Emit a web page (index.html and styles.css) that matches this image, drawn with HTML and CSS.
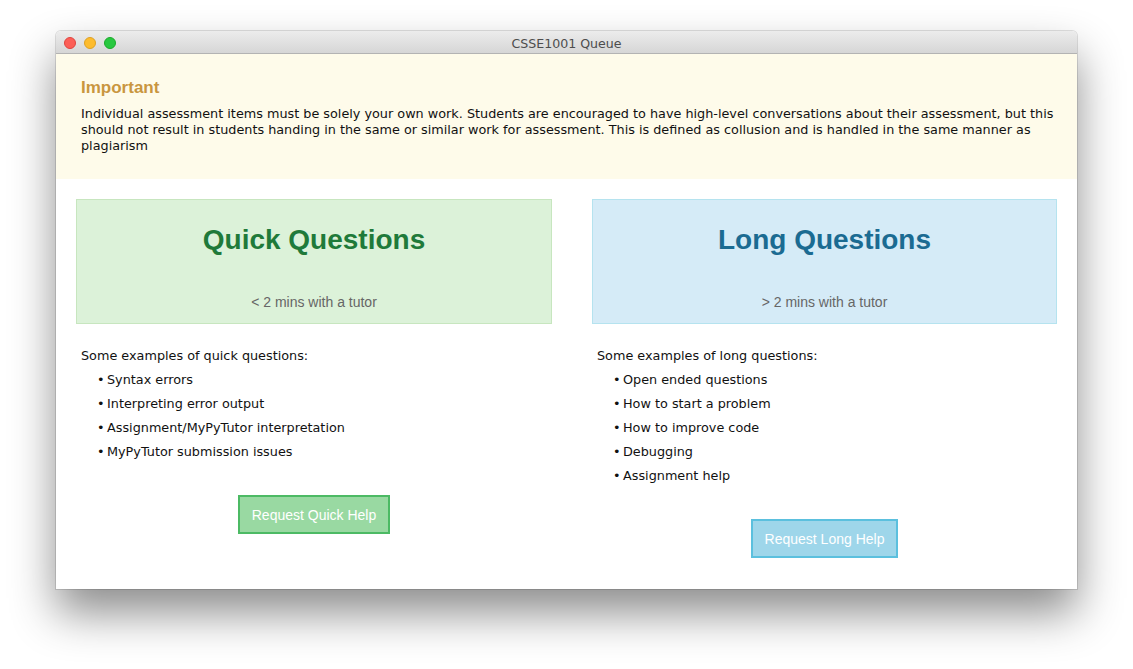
FILE: index.html
```html
<!DOCTYPE html>
<html>
<head>
<meta charset="utf-8">
<title>CSSE1001 Queue</title>
<link rel="stylesheet" href="styles.css">
</head>
<body>
<div class="window">
  <div class="titlebar">
    <div class="lights">
      <span class="light red"></span>
      <span class="light yellow"></span>
      <span class="light green"></span>
    </div>
    <div class="title">CSSE1001 Queue</div>
  </div>
  <div class="content">
    <div class="important">
      <h3 class="important-title">Important</h3>
      <p class="important-text">Individual assessment items must be solely your own work. Students are encouraged to have high-level conversations about their assessment, but this should not result in students handing in the same or similar work for assessment. This is defined as collusion and is handled in the same manner as plagiarism</p>
    </div>
    <div class="columns">
      <div class="col">
        <div class="panel panel-quick">
          <h2 class="panel-title">Quick Questions</h2>
          <div class="panel-sub">&lt; 2 mins with a tutor</div>
        </div>
        <div class="examples">
          <div class="examples-intro">Some examples of quick questions:</div>
          <ul class="list">
            <li>Syntax errors</li>
            <li>Interpreting error output</li>
            <li>Assignment/MyPyTutor interpretation</li>
            <li>MyPyTutor submission issues</li>
          </ul>
        </div>
        <div class="btn-row"><button class="btn btn-quick">Request Quick Help</button></div>
      </div>
      <div class="col">
        <div class="panel panel-long">
          <h2 class="panel-title">Long Questions</h2>
          <div class="panel-sub">&gt; 2 mins with a tutor</div>
        </div>
        <div class="examples">
          <div class="examples-intro">Some examples of long questions:</div>
          <ul class="list">
            <li>Open ended questions</li>
            <li>How to start a problem</li>
            <li>How to improve code</li>
            <li>Debugging</li>
            <li>Assignment help</li>
          </ul>
        </div>
        <div class="btn-row"><button class="btn btn-long">Request Long Help</button></div>
      </div>
    </div>
  </div>
</div>
</body>
</html>
```
FILE: styles.css
```css
html, body {
  margin: 0;
  padding: 0;
  background: #ffffff;
}
body {
  box-sizing: border-box;
  min-height: 669px;
  padding: 31px 0 0 56px;
  font-family: "DejaVu Sans", sans-serif;
}
.window {
  width: 1021px;
  height: 558px;
  border-radius: 5px 5px 0 0;
  background: #ffffff;
  box-shadow: 0 0 0 1px rgba(0,0,0,0.12), 0 24px 45px rgba(0,0,0,0.45);
  overflow: hidden;
  display: flex;
  flex-direction: column;
}
.titlebar {
  height: 22px;
  border-bottom: 1px solid #b3b3b3;
  background: linear-gradient(#ececec, #d6d6d6);
  display: flex;
  align-items: center;
  position: relative;
}
.lights {
  display: flex;
  gap: 8px;
  padding: 2px 0 0 8px;
}
.light {
  width: 12px;
  height: 12px;
  border-radius: 50%;
  box-sizing: border-box;
}
.red { background: #fc5f57; border: 1px solid #e0443e; }
.yellow { background: #fdbc2e; border: 1px solid #dea123; }
.green { background: #28c840; border: 1px solid #1aab29; }
.title {
  position: absolute;
  left: 0;
  right: 0;
  top: 1px;
  line-height: 23px;
  text-align: center;
  font-size: 12.6px;
  color: #4d4d4d;
  pointer-events: none;
}
.content {
  flex: 1;
}
.important {
  background: #fefbea;
  padding: 24px 10px 25px 25px;
}
.important-title {
  margin: 0;
  font-family: "Liberation Sans", Arial, sans-serif;
  font-weight: bold;
  font-size: 17px;
  line-height: 20px;
  color: #c9963f;
}
.important-text {
  margin: 8px 0 0 0;
  font-size: 12.8px;
  line-height: 16px;
  color: #111;
}
.columns {
  display: grid;
  grid-template-columns: 476px 465px;
  column-gap: 40px;
  padding: 20px 20px 0 20px;
}
.col {
  display: flex;
  flex-direction: column;
}
.panel {
  height: 125px;
  box-sizing: border-box;
  border: 1px solid;
  padding-top: 24px;
  text-align: center;
  font-family: "Liberation Sans", Arial, sans-serif;
}
.panel-quick {
  background: #dcf2d9;
  border-color: #c7e6bf;
}
.panel-long {
  background: #d5ebf7;
  border-color: #b5e3ef;
}
.panel-title {
  margin: 0;
  font-size: 28px;
  line-height: 32px;
  font-weight: bold;
}
.panel-quick .panel-title { color: #1f7a3a; }
.panel-long .panel-title { color: #1b6b92; }
.panel-sub {
  margin-top: 36px;
  font-size: 14px;
  line-height: 20px;
  color: #666666;
}
.examples {
  padding: 20px 0 0 5px;
  font-size: 12.8px;
  line-height: 24px;
  color: #111;
}
.list {
  list-style: none;
  margin: 0;
  padding: 0 0 0 16px;
}
.list li::before {
  content: "\2022";
  display: inline-block;
  width: 10px;
}
.btn-row {
  display: flex;
  justify-content: center;
  padding-top: 31px;
}
.btn {
  height: 39px;
  box-sizing: border-box;
  padding: 0 12px;
  border: 2px solid;
  font-family: "Liberation Sans", Arial, sans-serif;
  font-size: 14px;
  color: #ffffff;
  border-radius: 0;
}
.btn-quick {
  background: #99d9a2;
  border-color: #4cba64;
}
.btn-long {
  background: #9ed6ea;
  border-color: #5bc0de;
}
```
